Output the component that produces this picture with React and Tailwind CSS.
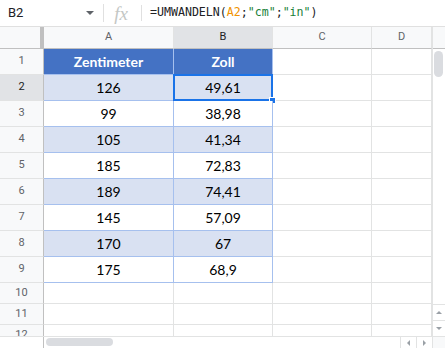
import React from 'react';

const cols = [
  { id: 'A', w: 'w-[130px]' },
  { id: 'B', w: 'w-[99px]' },
  { id: 'C', w: 'w-[99px]' },
  { id: 'D', w: 'w-[60px]' },
];

const data = [
  ['126', '49,61'],
  ['99', '38,98'],
  ['105', '41,34'],
  ['185', '72,83'],
  ['189', '74,41'],
  ['145', '57,09'],
  ['170', '67'],
  ['175', '68,9'],
];

const RowHead = ({ n, h, active }) => (
  <div
    className={`w-[44px] ${h} shrink-0 flex items-center justify-center border-r border-b border-r-[#c0c0c0] border-b-[#e2e3e3] text-[11px] ${
      active ? 'bg-[#e1e3e6] text-[#202124]' : 'bg-[#f8f9fa] text-[#5f6368]'
    }`}
  >
    {n}
  </div>
);

const Cell = ({ w, h, className = '', children }) => (
  <div className={`${w} ${h} shrink-0 flex items-center justify-center border-r border-b ${className}`}>
    {children}
  </div>
);

export default function App() {
  return (
    <div className="w-[445px] h-[348px] overflow-hidden bg-white font-['Roboto',sans-serif] select-none">
      {/* formula bar */}
      <div className="h-[27px] flex items-center border-b border-[#e0e0e0]">
        <div className="w-[100px] flex items-center pl-[8px] pr-[6px] text-[13px] text-[#202124]">
          <span className="flex-1">B2</span>
          <span className="w-0 h-0 border-l-[4px] border-r-[4px] border-t-[4px] border-l-transparent border-r-transparent border-t-[#5f6368]" />
        </div>
        <div className="w-px h-[18px] bg-[#e0e0e0] ml-[3px]" />
        <div className="w-[37px] flex items-center justify-center font-['Liberation_Serif',serif] italic text-[19px] text-[#c4c7c5] leading-none pr-[3px]">
          fx
        </div>
        <div className="w-px h-[16px] bg-[#e0e0e0]" />
        <div className="pl-[8px] font-['DejaVu_Sans_Mono',monospace] text-[11.6px] text-[#202124]">
          =UMWANDELN(<span className="text-[#f09300]">A2</span>;<span className="text-[#188038]">"cm"</span>;<span className="text-[#188038]">"in"</span>)
        </div>
      </div>

      <div className="flex">
        {/* sheet */}
        <div className="w-[432px] flex flex-col">
          {/* column header */}
          <div className="flex h-[22px]">
            <div className="w-[44px] h-[22px] bg-[#f8f9fa] border-r-4 border-b border-[#c0c0c0]" />
            {cols.map((c) => (
              <div
                key={c.id}
                className={`${c.w} h-[22px] flex items-center justify-center border-r border-b border-r-[#e2e3e3] border-b-[#c0c0c0] text-[11px] ${
                  c.id === 'B' ? 'bg-[#e1e3e6] text-[#202124]' : 'bg-[#f8f9fa] text-[#5f6368]'
                }`}
              >
                {c.id}
              </div>
            ))}
          </div>

          {/* row 1: header */}
          <div className="flex">
            <RowHead n={1} h="h-[26px]" />
            <Cell w="w-[130px]" h="h-[26px]" className="bg-[#4472c4] border-[#a6c0ee] text-white font-bold font-['Lato',sans-serif] text-[14px]">
              Zentimeter
            </Cell>
            <Cell w="w-[99px]" h="h-[26px]" className="bg-[#4472c4] border-[#a6c0ee] text-white font-bold font-['Lato',sans-serif] text-[14px]">
              Zoll
            </Cell>
            <Cell w="w-[99px]" h="h-[26px]" className="border-[#e2e3e3]" />
            <Cell w="w-[60px]" h="h-[26px]" className="border-[#e2e3e3]" />
          </div>

          {data.map((r, i) => {
            const band = i % 2 === 0 ? 'bg-[#d9e1f2]' : 'bg-white';
            return (
              <div key={i} className="flex">
                <RowHead n={i + 2} h="h-[26px]" active={i === 0} />
                <Cell w="w-[130px]" h="h-[26px]" className={`${band} border-[#a6c0ee] font-['Lato',sans-serif] text-[14px] text-black`}>
                  {r[0]}
                </Cell>
                <Cell
                  w="w-[99px]"
                  h="h-[26px]"
                  className={`${band} border-[#a6c0ee] font-['Lato',sans-serif] text-[14px] text-black relative`}
                >
                  {r[1]}
                  {i === 0 && (
                    <>
                      <span className="absolute -left-px -top-px w-[100px] h-[27px] border-2 border-[#1a73e8]" />
                      <span className="absolute -right-[4px] -bottom-[4px] w-[7px] h-[7px] bg-[#1a73e8] border border-white" />
                    </>
                  )}
                </Cell>
                <Cell w="w-[99px]" h="h-[26px]" className="border-[#e2e3e3]" />
                <Cell w="w-[60px]" h="h-[26px]" className="border-[#e2e3e3]" />
              </div>
            );
          })}

          {[10, 11, 12].map((n) => (
            <div key={n} className="flex">
              <RowHead n={n} h="h-[21px]" />
              {cols.map((c) => (
                <Cell key={c.id} w={c.w} h="h-[21px]" className="border-[#e2e3e3]" />
              ))}
            </div>
          ))}
        </div>

        {/* vertical scrollbar */}
        <div className="w-[13px] h-[309px] border-l border-[#e2e3e3] bg-white flex flex-col">
          <div className="h-[22px] bg-[#f8f9fa] border-b border-[#c0c0c0]" />
          <div className="flex-1 relative">
            <div className="absolute left-[1px] top-[2px] w-[9px] h-[26px] rounded-full bg-[#dadce0]" />
          </div>
          <div className="h-[16px] flex items-center justify-center border-t border-[#e2e3e3]">
            <span className="w-0 h-0 border-l-[3px] border-r-[3px] border-b-[3px] border-l-transparent border-r-transparent border-b-[#9aa0a6]" />
          </div>
          <div className="h-[16px] flex items-center justify-center border-t border-[#e2e3e3]">
            <span className="w-0 h-0 border-l-[3px] border-r-[3px] border-t-[3px] border-l-transparent border-r-transparent border-t-[#9aa0a6]" />
          </div>
        </div>
      </div>

      {/* horizontal scrollbar */}
      <div className="relative -mt-[10px] h-[12px] flex border-t border-[#e2e3e3] bg-white">
        <div className="w-[44px] border-r border-[#c0c0c0] bg-white" />
        <div className="flex-1 relative">
          <div className="absolute left-[2px] top-[1px] w-[67px] h-[8px] rounded-full bg-[#dadce0]" />
        </div>
        <div className="w-[16px] flex items-center justify-center border-l border-[#e2e3e3]">
          <span className="w-0 h-0 border-t-[3px] border-b-[3px] border-r-[3px] border-t-transparent border-b-transparent border-r-[#9aa0a6]" />
        </div>
        <div className="w-[16px] flex items-center justify-center border-l border-[#e2e3e3]">
          <span className="w-0 h-0 border-t-[3px] border-b-[3px] border-l-[3px] border-t-transparent border-b-transparent border-l-[#9aa0a6]" />
        </div>
        <div className="w-[13px] border-l border-[#e2e3e3] bg-[#f8f9fa]" />
      </div>
    </div>
  );
}
